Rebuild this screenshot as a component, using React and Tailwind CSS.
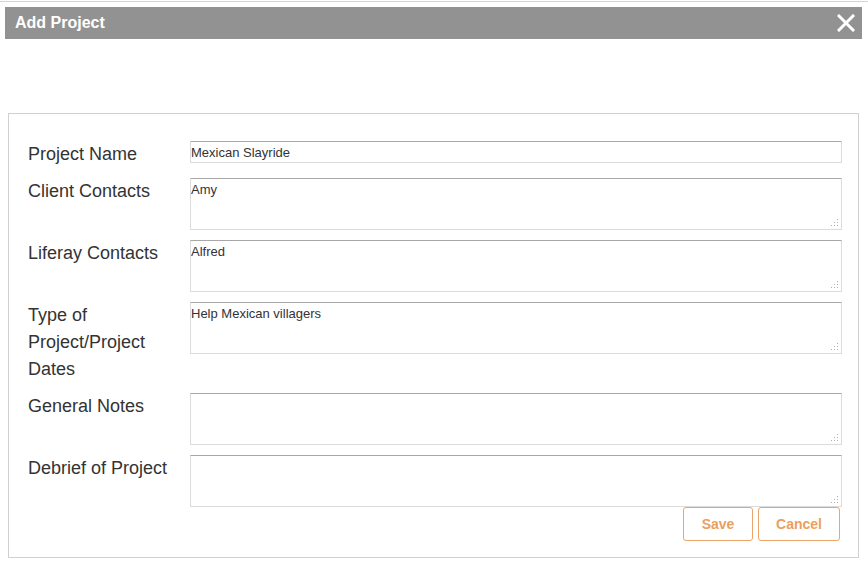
const fields = [
  { label: "Project Name", value: "Mexican Slayride", input: true },
  { label: "Client Contacts", value: "Amy" },
  { label: "Liferay Contacts", value: "Alfred" },
  { label: "Type of Project/Project Dates", value: "Help Mexican villagers" },
  { label: "General Notes", value: "" },
  { label: "Debrief of Project", value: "" },
];

function Grip() {
  return (
    <svg width="8" height="8" viewBox="0 0 8 8" className="absolute right-[3px] bottom-[3px] pointer-events-none">
      <rect x="6" y="0" width="1" height="1" fill="#b0b0b0" />
      <rect x="3" y="3" width="1" height="1" fill="#b0b0b0" />
      <rect x="6" y="3" width="1" height="1" fill="#b0b0b0" />
      <rect x="0" y="6" width="1" height="1" fill="#b0b0b0" />
      <rect x="3" y="6" width="1" height="1" fill="#b0b0b0" />
      <rect x="6" y="6" width="1" height="1" fill="#b0b0b0" />
    </svg>
  );
}

export default function App() {
  return (
    <div className="w-[868px] h-[567px] bg-white overflow-hidden font-['Liberation_Sans',Arial,sans-serif]">
      <div className="pt-px">
        <div className="h-px bg-[#d4d4d4]" />
      </div>

      {/* Header bar */}
      <div className="mt-[5px] ml-[5px] mr-[6px] h-8 bg-[#929292] flex items-center justify-between pl-[10px] pr-[6px]">
        <h2 className="text-white font-bold text-[16px]">Add Project</h2>
        <svg width="18" height="18" viewBox="0 0 18 18" className="mr-[1px]">
          <path d="M2 2 L16 16 M16 2 L2 16" stroke="#fff" strokeWidth="3" strokeLinecap="square" />
        </svg>
      </div>

      {/* Form panel */}
      <div className="mt-[74px] ml-2 mr-[9px] h-[445px] border border-[#d0d0d0] pt-[27px] pl-[19px] pr-4">
        {fields.map((f) => (
          <div key={f.label} className="flex items-start mb-[10px]">
            <label className="w-[162px] shrink-0 pr-4 text-[18px] leading-[27px] text-[#333]">
              {f.label}
            </label>
            {f.input ? (
              <input
                type="text"
                defaultValue={f.value}
                className="w-[652px] h-[22px] px-0 text-[13px] text-[#333] border border-[#dcdcdc] border-t-[#a8a8a8] outline-none"
              />
            ) : (
              <div className="relative">
                <textarea
                  defaultValue={f.value}
                  className="block w-[652px] h-[52px] px-0 py-[2px] text-[13px] leading-[18px] text-[#333] border border-[#dcdcdc] border-t-[#a8a8a8] outline-none resize-none"
                />
                <Grip />
              </div>
            )}
          </div>
        ))}
        <div className="flex justify-end gap-[5px] -mt-[10px] pr-[2px]">
          <button className="w-[70px] h-[34px] border border-[#eaa66a] rounded-[3px] text-[#eb9f5f] font-bold text-[14px]">
            Save
          </button>
          <button className="w-[82px] h-[34px] border border-[#eaa66a] rounded-[3px] text-[#eb9f5f] font-bold text-[14px]">
            Cancel
          </button>
        </div>
      </div>
    </div>
  );
}
